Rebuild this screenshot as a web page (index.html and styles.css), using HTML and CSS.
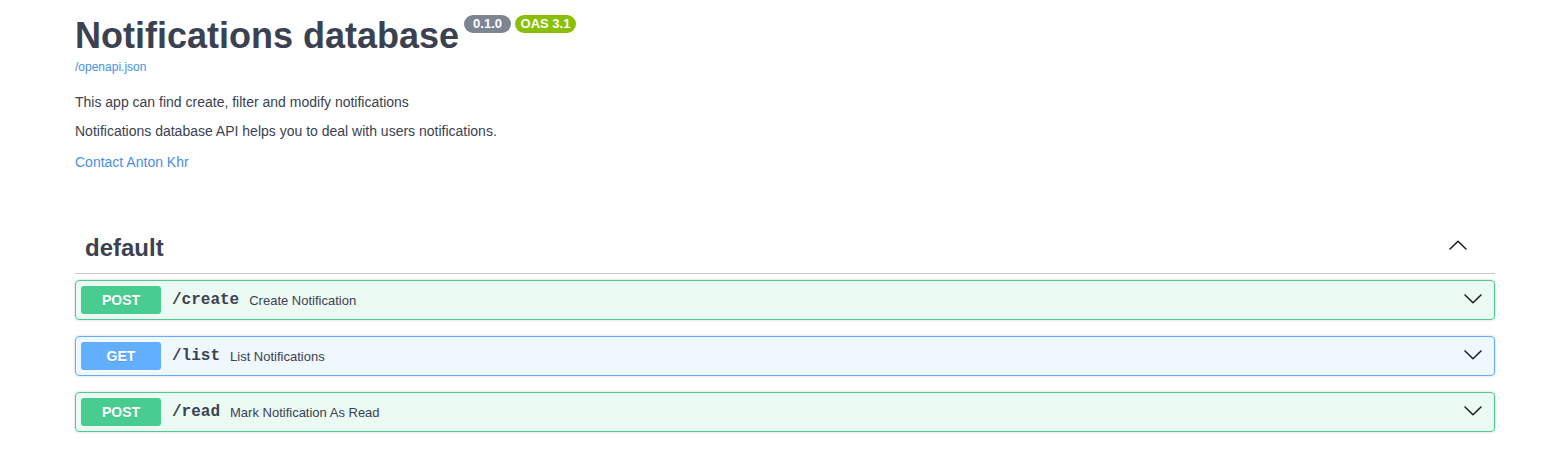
FILE: index.html
```html
<!DOCTYPE html>
<html lang="en">
<head>
<meta charset="utf-8">
<title>Notifications database</title>
<link rel="stylesheet" href="styles.css">
</head>
<body>
<div class="wrap">
  <section class="info">
    <div class="title-row">
      <h1 class="title">Notifications database</h1>
      <span class="badge badge-version">0.1.0</span>
      <span class="badge badge-oas">OAS 3.1</span>
    </div>
    <a class="spec-link" href="#">/openapi.json</a>
    <div class="desc">
      <p>This app can find create, filter and modify notifications</p>
      <p>Notifications database API helps you to deal with users notifications.</p>
    </div>
    <div class="contact"><a href="#">Contact Anton Khr</a></div>
  </section>

  <section class="tag">
    <h3 class="tag-head">
      <span class="tag-name">default</span>
      <svg class="chev-up" width="18" height="10" viewBox="0 0 18 10"><path d="M1 9 L9 1.2 L17 9" fill="none" stroke="#1b1b1b" stroke-width="1.5" stroke-linecap="round" stroke-linejoin="round"/></svg>
    </h3>

    <div class="opblock post">
      <span class="method">POST</span>
      <span class="path">/create</span>
      <span class="summary">Create Notification</span>
      <svg class="chev-down" width="18" height="10" viewBox="0 0 18 10"><path d="M1 1 L9 8.8 L17 1" fill="none" stroke="#1b1b1b" stroke-width="1.5" stroke-linecap="round" stroke-linejoin="round"/></svg>
    </div>

    <div class="opblock get">
      <span class="method">GET</span>
      <span class="path">/list</span>
      <span class="summary">List Notifications</span>
      <svg class="chev-down" width="18" height="10" viewBox="0 0 18 10"><path d="M1 1 L9 8.8 L17 1" fill="none" stroke="#1b1b1b" stroke-width="1.5" stroke-linecap="round" stroke-linejoin="round"/></svg>
    </div>

    <div class="opblock post">
      <span class="method">POST</span>
      <span class="path">/read</span>
      <span class="summary">Mark Notification As Read</span>
      <svg class="chev-down" width="18" height="10" viewBox="0 0 18 10"><path d="M1 1 L9 8.8 L17 1" fill="none" stroke="#1b1b1b" stroke-width="1.5" stroke-linecap="round" stroke-linejoin="round"/></svg>
    </div>
  </section>
</div>
</body>
</html>
```

FILE: styles.css
```css
* { box-sizing: border-box; }

body {
  margin: 0;
  background: #fff;
  color: #3b4151;
  font-family: "Liberation Sans", Arial, Helvetica, sans-serif;
}

a { color: #4990e2; text-decoration: none; }

.wrap {
  width: 1420px;
  margin-left: 75px;
}

.info { padding-top: 15px; }

.title-row {
  display: flex;
  align-items: flex-start;
}

.title {
  margin: 3px 0 0;
  font-size: 36px;
  line-height: 36px;
  font-weight: 700;
  color: #3b4151;
}

.badge {
  display: inline-block;
  height: 18px;
  line-height: 18px;
  border-radius: 57px;
  color: #fff;
  font-size: 13px;
  font-weight: 700;
  margin-left: 4px;
}
.badge-version { background: #7d8492; padding: 0 9px; margin-left: 5px; }
.badge-oas { background: #89bf04; padding: 0 5.5px; }

.spec-link {
  display: block;
  margin-top: 6px;
  font-size: 12px;
  line-height: 14px;
}

.desc { margin-top: 19px; }
.desc p {
  margin: 0 0 11px;
  font-size: 14px;
  line-height: 18px;
}
.desc p:last-child { margin-bottom: 0; }

.contact {
  margin-top: 13px;
  font-size: 14px;
  line-height: 18px;
}

.tag { margin-top: 52px; }

.tag-head {
  display: flex;
  align-items: center;
  margin: 0 0 6px;
  padding: 10px 20px 10px 10px;
  border-bottom: 1px solid rgba(59, 65, 81, 0.3);
  font-size: 24px;
  line-height: 30px;
  font-weight: 700;
}
.tag-name { flex: 1; }
.chev-up { margin: 0 8px 6px 0; }

.opblock {
  display: flex;
  align-items: center;
  height: 40px;
  margin-bottom: 16px;
  padding: 0 12px 0 5px;
  border: 1px solid;
  border-radius: 4px;
  box-shadow: 0 0 3px rgba(0, 0, 0, 0.19);
}
.opblock.post { border-color: #49cc90; background: rgba(73, 204, 144, 0.1); }
.opblock.get { border-color: #61affe; background: rgba(97, 175, 254, 0.1); }

.method {
  width: 80px;
  height: 28px;
  line-height: 28px;
  text-align: center;
  border-radius: 3px;
  color: #fff;
  font-size: 14px;
  font-weight: 700;
  text-shadow: 0 1px 0 rgba(0, 0, 0, 0.1);
}
.post .method { background: #49cc90; }
.get .method { background: #61affe; }

.path {
  padding: 0 10px 0 11px;
  font-family: "Liberation Mono", "Courier New", monospace;
  font-size: 16px;
  font-weight: 700;
  color: #3b4151;
}

.summary {
  flex: 1;
  font-size: 13px;
  color: #3b4151;
}

.chev-down { margin-top: -2px; }
```
